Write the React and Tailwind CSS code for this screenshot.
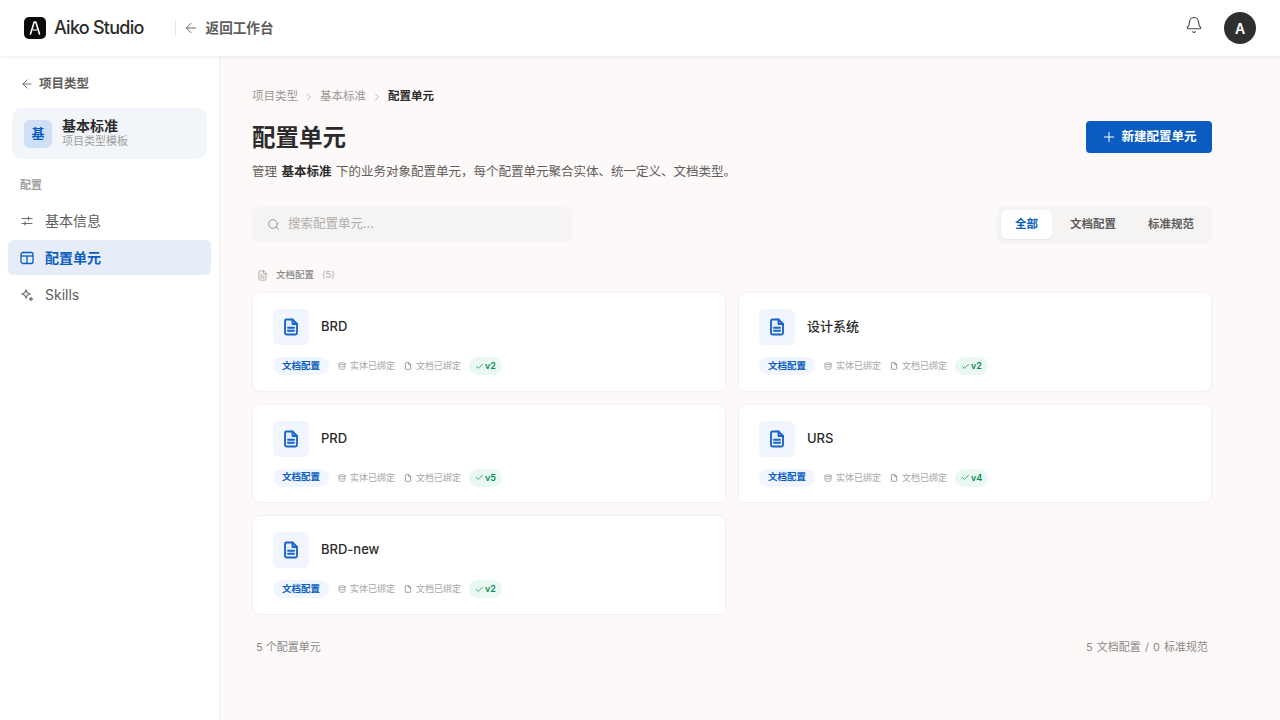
import React from "react";
import {
  ArrowLeft,
  Bell,
  Check,
  ChevronRight,
  Database,
  File,
  FileText,
  Plus,
  Search,
} from "lucide-react";

const font = "font-['Inter','Noto_Sans_CJK_SC',sans-serif]";

const cards = [
  { name: "BRD", version: "v2" },
  { name: "设计系统", version: "v2" },
  { name: "PRD", version: "v5" },
  { name: "URS", version: "v4" },
  { name: "BRD-new", version: "v2" },
];

const FileIcon = () => (
  <svg width="18" height="18" viewBox="0 0 24 24" fill="none" stroke="#1a66c6" strokeWidth="2.500" strokeLinecap="round" strokeLinejoin="round">
    <path d="M14 2H6a2 2 0 0 0-2 2v16a2 2 0 0 0 2 2h12a2 2 0 0 0 2-2V8z" fill="#e6eefb" />
    <path d="M14 2v6h6" />
    <path d="M8 13h8" />
    <path d="M8 17h8" />
  </svg>
);

const SlidersIcon = ({ size, className }) => (
  <svg width={size} height={size} viewBox="0 0 14 14" fill="none" stroke="currentColor" strokeWidth="1.200" strokeLinecap="round" className={className}>
    <path d="M2 4.500h10" />
    <path d="M8.500 3v3" />
    <path d="M2 9.500h10" />
    <path d="M5 8v3" />
  </svg>
);

const UnitIcon = ({ size, className }) => (
  <svg width={size} height={size} viewBox="0 0 14 14" fill="none" stroke="currentColor" strokeWidth="1.300" strokeLinejoin="round" className={className}>
    <rect x="1" y="1.500" width="12" height="11" rx="2" />
    <path d="M1 5h12" />
    <path d="M7 5v7.500" />
  </svg>
);

const SkillsIcon = ({ size, className }) => (
  <svg width={size} height={size} viewBox="0 0 14 14" fill="none" stroke="currentColor" strokeWidth="1.100" strokeLinejoin="round" strokeLinecap="round" className={className}>
    <path d="M6 1.800 7.200 4.800 10.200 6 7.200 7.200 6 10.200 4.800 7.200 1.800 6 4.800 4.800z" />
    <path d="M11 9.500v3M9.500 11h3" strokeWidth="1.300" />
  </svg>
);

const ConfigCard = ({ card }) => (
  <div className="h-[99.5px] rounded-lg border border-[#f5f1f0] bg-white px-5 pt-4">
    <div className="flex items-center gap-3">
      <div className="flex h-9 w-9 items-center justify-center rounded-md bg-[#f1f5fe]">
        <FileIcon />
      </div>
      <span className="text-[13px] font-medium text-[#2b2b2b]">{card.name}</span>
    </div>
    <div className="mt-[12px] flex h-[18px] items-center">
      <span className="flex h-[18px] w-14 items-center justify-center rounded-full bg-[#f1f5fe] text-[9.500px] font-semibold text-[#0a5cc0]">
        文档配置
      </span>
      <span className="ml-[9px] flex items-center gap-1 text-[9px] text-[#a8a6a5]">
        <Database size={8} strokeWidth={2} className="text-[#8b8988]" />
        实体已绑定
      </span>
      <span className="ml-[9px] flex items-center gap-1 text-[9px] text-[#a8a6a5]">
        <File size={8} strokeWidth={2.500} className="text-[#8b8988]" />
        文档已绑定
      </span>
      <span className="ml-[8px] flex h-[18px] items-center gap-[1px] rounded-full bg-[#e9f9f1] px-[6px] text-[9px] font-semibold text-[#0b8a5b]">
        <Check size={9} strokeWidth={2} />
        {card.version}
      </span>
    </div>
  </div>
);

const NavItem = ({ icon: Icon, label, active }) => (
  <div
    className={`mx-2 flex h-[35px] items-center gap-[11px] rounded-md px-3 text-[14px] ${
      active ? "bg-[#e6edf8] font-semibold text-[#0a5cc0]" : "text-[#5e5d5c]"
    }`}
  >
    <Icon size={14} className={active ? "text-[#0a5cc0]" : "text-[#6f6e6d]"} />
    {label}
  </div>
);

export default function App() {
  return (
    <div className={`flex h-[720px] w-[1280px] flex-col overflow-hidden bg-[#fdf9f8] ${font}`}>
      <header className="relative z-10 flex h-14 shrink-0 items-center justify-between bg-white pl-6 pr-6 shadow-[0_1px_3px_rgba(0,0,0,0.08)]">
        <div className="flex items-center">
          <svg width="22" height="22" viewBox="0 0 22 22">
            <rect width="22" height="22" rx="5" fill="#0b0b0b" />
            <path d="M6.500 17 10.200 5h1.600L15.500 17" fill="none" stroke="#fff" strokeWidth="1.600" strokeLinecap="round" strokeLinejoin="round" />
            <path d="M8.800 13h4.400" fill="none" stroke="#fff" strokeWidth="1.100" />
          </svg>
          <span className="ml-[8px] mb-[1px] text-[18px] leading-[22px] font-medium tracking-[-0.75px] text-[#2b2b2b]">Aiko Studio</span>
          <div className="ml-[31px] h-4 w-px bg-[#e8e6e5]" />
          <ArrowLeft size={16} strokeWidth={1.500} className="ml-[7px] text-[#6a6968]" />
          <span className="ml-[7px] mb-[1px] text-[13.600px] leading-[20px] font-semibold text-[#5e5d5c]">返回工作台</span>
        </div>
        <div className="flex items-center gap-[21px]">
          <Bell size={18} strokeWidth={1.600} className="mb-[6px] text-[#4f4e4d]" />
          <div className="flex h-8 w-8 items-center justify-center rounded-full bg-[#2f2f2f] text-[14px] font-semibold text-white">
            A
          </div>
        </div>
      </header>

      <div className="flex min-h-0 flex-1">
        <aside className="w-[220px] shrink-0 border-r border-[#f1eeed] bg-white">
          <div className="flex h-[52px] items-center gap-[5px] pl-[20px] pt-1 text-[12.500px] font-semibold text-[#5e5d5c]">
            <ArrowLeft size={14} strokeWidth={1.500} />
            项目类型
          </div>
          <div className="mx-3 flex h-[51px] items-center gap-[10px] rounded-[10px] bg-[#f2f6fb] px-3">
            <div className="flex h-7 w-7 items-center justify-center rounded-md bg-[#cfe0f6] text-[13px] font-bold text-[#0a5cc0]">
              基
            </div>
            <div className="flex flex-col">
              <span className="text-[14px] leading-[16px] font-semibold text-[#2b2b2b]">基本标准</span>
              <span className="text-[11px] leading-[15px] text-[#a09e9d]">项目类型模板</span>
            </div>
          </div>
          <div className="mt-[18px] mb-[10px] pl-5 text-[11px] leading-4 font-semibold text-[#a09e9d]">配置</div>
          <div className="flex flex-col gap-[2px]">
            <NavItem icon={SlidersIcon} label="基本信息" />
            <NavItem icon={UnitIcon} label="配置单元" active />
            <NavItem icon={SkillsIcon} label="Skills" />
          </div>
        </aside>

        <main className="min-w-0 flex-1 pl-8 pr-[68px] pt-[33px]">
          <nav className="flex h-4 items-center text-[11.500px] text-[#9a9897]">
            项目类型
            <ChevronRight size={12} strokeWidth={1.500} className="mx-[5px] text-[#a8a6a5]" />
            基本标准
            <ChevronRight size={12} strokeWidth={1.500} className="mx-[5px] text-[#a8a6a5]" />
            <span className="font-semibold text-[#2b2b2b]">配置单元</span>
          </nav>

          <div className="mt-[16px] flex items-start justify-between">
            <div>
              <h1 className="pt-[2px] text-[23.500px] leading-[30px] font-bold text-[#2b2b2b]">配置单元</h1>
              <p className="mt-[10px] text-[12.500px] leading-[17px] text-[#5e5d5c]">
                管理 <strong className="mx-[1px] font-semibold text-[#2b2b2b]">基本标准</strong> 下的业务对象配置单元，每个配置单元聚合实体、统一定义、文档类型。
              </p>
            </div>
            <button className="flex h-8 w-[126px] items-center justify-center gap-[4px] rounded bg-[#0a5cc0] text-[12.500px] font-semibold text-white">
              <Plus size={16} strokeWidth={1.500} />
              新建配置单元
            </button>
          </div>

          <div className="mt-[26px] flex items-center justify-between">
            <div className="flex h-[35px] w-[320px] items-center gap-[8px] rounded-lg bg-[#f6f4f3] pl-[15px] text-[12.500px] text-[#b0aeac]">
              <Search size={13} strokeWidth={1.600} className="text-[#8b8988]" />
              搜索配置单元...
            </div>
            <div className="flex h-[37px] w-[215px] items-center rounded-lg bg-[#f6f4f3] pl-[4px] text-[11.500px] font-semibold text-[#5e5d5c] shadow-[0_1px_2px_rgba(0,0,0,0.03)]">
              <span className="flex h-[29px] w-[51px] items-center justify-center rounded-md bg-white text-[#0a5cc0] shadow-[0_1px_2px_rgba(0,0,0,0.06)]">
                全部
              </span>
              <span className="ml-[18px]">文档配置</span>
              <span className="ml-[32px]">标准规范</span>
            </div>
          </div>

          <div className="mt-[24px] mb-[9px] flex h-4 items-center pl-[5px] text-[9.500px] font-medium text-[#8b8988]">
            <FileText size={11} strokeWidth={1.500} className="text-[#8b8988]" />
            <span className="ml-[8px]">文档配置</span>
            <span className="ml-[8px] font-normal text-[#b0aeac]">(5)</span>
          </div>

          <div className="grid grid-cols-2 gap-x-3 gap-y-[12px]">
            {cards.map((card) => (
              <ConfigCard key={card.name} card={card} />
            ))}
          </div>

          <div className="mt-[24px] flex justify-between px-1 text-[11px] leading-4 text-[#8b8988]">
            <span>5 个配置单元</span>
            <span className="[word-spacing:1px]">5 文档配置 / 0 标准规范</span>
          </div>
        </main>
      </div>
    </div>
  );
}
